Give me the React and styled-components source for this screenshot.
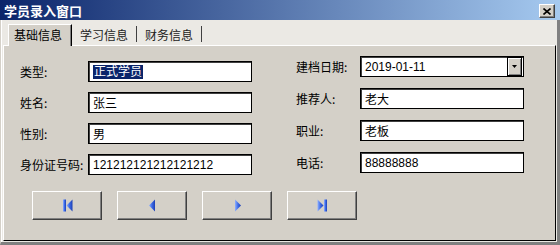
import React from 'react';
import styled, { createGlobalStyle } from 'styled-components';

const GlobalStyle = createGlobalStyle`
  html, body {
    margin: 0;
    padding: 0;
    width: 560px;
    height: 245px;
    overflow: hidden;
    background: #d4d0c8;
  }
`;

const font = `"Liberation Sans", "Noto Sans CJK SC", sans-serif`;

const Window = styled.div`
  width: 560px;
  height: 245px;
  display: flex;
  flex-direction: column;
  font-family: ${font};
  font-size: 12px;
  color: #000;
  background: #d4d0c8;
  box-sizing: border-box;
`;

const TitleBar = styled.div`
  height: 20px;
  flex: none;
  display: flex;
  align-items: center;
  justify-content: space-between;
  padding: 0 5px 0 4px;
  background: linear-gradient(to right, #0a246a, #a6caf0);
  color: #fff;
  font-family: "Noto Sans CJK SC", sans-serif;
  font-weight: bold;
  font-size: 13px;
  box-sizing: border-box;
`;

const CloseButton = styled.div`
  width: 16px;
  height: 14px;
  margin-top: 2px;
  box-sizing: border-box;
  display: flex;
  align-items: center;
  justify-content: center;
  background: #d4d0c8;
  border-top: 1px solid #fff;
  border-left: 1px solid #fff;
  border-right: 1px solid #404040;
  border-bottom: 1px solid #404040;
  box-shadow: inset -1px -1px 0 #808080;
`;

const Body = styled.div`
  flex: 1;
  display: flex;
  flex-direction: column;
  background: #ebe9e4;
  border-left: 1px solid #d4d0c8;
  border-right: 3px solid #808080;
  border-bottom: 3px solid #808080;
  box-shadow: inset 1px 0 0 #fff;
`;

const TabStrip = styled.div`
  height: 25px;
  flex: none;
  display: flex;
  align-items: flex-end;
  padding-left: 7px;
  box-sizing: border-box;
`;

const Tab = styled.div`
  height: ${({ $active }) => ($active ? '22px' : '16px')};
  margin-bottom: ${({ $active }) => ($active ? '-1px' : '3px')};
  display: flex;
  align-items: center;
  box-sizing: border-box;
  font-family: "Noto Sans CJK SC", sans-serif;
  font-size: 12px;
  color: ${({ $active }) => ($active ? '#000' : '#222')};
  position: relative;
  z-index: 1;
  ${({ $active }) =>
    $active
      ? `
    padding: 0 9px 2px 5px;
    background: #d4d0c8;
    border-left: 1px solid #fff;
    border-top: 1px solid #fff;
    border-right: 1px solid #000;
    box-shadow: inset -1px 0 0 #808080;
  `
      : `
    padding: 0 8px 0 8px;
    border-right: 1px solid #404040;
  `}
`;

const Panel = styled.div`
  flex: 1;
  display: flex;
  flex-direction: column;
  margin: 0 1px 1px 2px;
  background: #d4d0c8;
  border-top: 1px solid #fff;
  border-left: 1px solid #fff;
  border-right: 1px solid #000;
  border-bottom: 1px solid #000;
`;

const FormGrid = styled.div`
  display: flex;
  gap: 44px;
  padding-left: 16px;
`;

const Column = styled.div`
  display: flex;
  flex-direction: column;
  gap: ${({ $gap }) => $gap}px;
  padding-top: ${({ $top }) => $top}px;
`;

const Row = styled.div`
  display: flex;
  align-items: center;
  height: 21px;
`;

const Label = styled.div`
  width: ${({ $width }) => $width}px;
  font-family: "Noto Sans CJK SC", sans-serif;
  font-size: 12px;
  flex: none;
`;

const Field = styled.div`
  width: 164px;
  height: 21px;
  box-sizing: border-box;
  display: flex;
  align-items: center;
  padding-left: 4px;
  background: #fff;
  border: 1px solid #000;
  box-shadow: inset 1px 1px 0 #404040;
  font-size: 12px;
  white-space: nowrap;
  overflow: hidden;
`;

const Selected = styled.span`
  background: #0a246a;
  color: #fff;
  padding: 0 1px;
  line-height: 14px;
`;

const Combo = styled(Field)`
  justify-content: space-between;
  padding-right: 1px;
`;

const DropButton = styled.div`
  width: 15px;
  height: 19px;
  box-sizing: border-box;
  display: flex;
  align-items: center;
  justify-content: center;
  background: #d4d0c8;
  border: 1px solid #000;
  box-shadow: inset 1px 1px 0 #fff, inset -1px -1px 0 #808080;
`;

const ButtonRow = styled.div`
  display: flex;
  gap: 15px;
  padding-left: 28px;
  margin-top: 16px;
`;

const NavButton = styled.div`
  width: 70px;
  height: 29px;
  box-sizing: border-box;
  display: flex;
  align-items: center;
  justify-content: center;
  background: #d4d0c8;
  border-top: 1px solid #fff;
  border-left: 1px solid #fff;
  border-right: 1px solid #404040;
  border-bottom: 1px solid #404040;
  box-shadow: inset -1px -1px 0 #808080;
`;

const NavIcon = ({ kind }) => {
  const id = `g-${kind}`;
  const fill = `url(#${id})`;
  return (
    <svg width="11" height="13" viewBox="0 0 11 13">
      <defs>
        <linearGradient id={id} x1="0" y1="0" x2="1" y2="0">
          <stop offset="0" stopColor="#8fb0ff" />
          <stop offset="0.5" stopColor="#3d6ae6" />
          <stop offset="1" stopColor="#1c3fb4" />
        </linearGradient>
      </defs>
      {kind === 'first' && (
        <>
          <rect x="1" y="0.5" width="3" height="12" fill={fill} />
          <polygon points="10.5,0.5 4.5,6.5 10.5,12.5" fill={fill} />
        </>
      )}
      {kind === 'prev' && <polygon points="8,0.5 2,6.5 8,12.5" fill={fill} />}
      {kind === 'next' && <polygon points="3,0.5 9,6.5 3,12.5" fill={fill} />}
      {kind === 'last' && (
        <>
          <polygon points="0.5,0.5 6.5,6.5 0.5,12.5" fill={fill} />
          <rect x="7" y="0.5" width="3" height="12" fill={fill} />
        </>
      )}
    </svg>
  );
};

const leftRows = [
  { label: '类型:', value: <Selected>正式学员</Selected> },
  { label: '姓名:', value: '张三' },
  { label: '性别:', value: '男' },
  { label: '身份证号码:', value: '121212121212121212' },
];

const rightRows = [
  { label: '推荐人:', value: '老大' },
  { label: '职业:', value: '老板' },
  { label: '电话:', value: '88888888' },
];

export default function App() {
  return (
    <Window>
      <GlobalStyle />
      <TitleBar>
        <span>学员录入窗口</span>
        <CloseButton>
          <svg width="8" height="7" viewBox="0 0 8 7">
            <path d="M0.5 0.5 L7.5 6.5 M7.5 0.5 L0.5 6.5" stroke="#000" strokeWidth="1.6" />
          </svg>
        </CloseButton>
      </TitleBar>
      <Body>
        <TabStrip>
          <Tab $active>基础信息</Tab>
          <Tab>学习信息</Tab>
          <Tab>财务信息</Tab>
        </TabStrip>
        <Panel>
          <FormGrid>
            <Column $top={15} $gap={10}>
              {leftRows.map((r) => (
                <Row key={r.label}>
                  <Label $width={68}>{r.label}</Label>
                  <Field>{r.value}</Field>
                </Row>
              ))}
            </Column>
            <Column $top={10} $gap={11}>
              <Row>
                <Label $width={64}>建档日期:</Label>
                <Combo>
                  <span>2019-01-11</span>
                  <DropButton>
                    <svg width="5" height="3" viewBox="0 0 5 3">
                      <polygon points="0,0 5,0 2.5,3" fill="#000" />
                    </svg>
                  </DropButton>
                </Combo>
              </Row>
              {rightRows.map((r) => (
                <Row key={r.label}>
                  <Label $width={64}>{r.label}</Label>
                  <Field>{r.value}</Field>
                </Row>
              ))}
            </Column>
          </FormGrid>
          <ButtonRow>
            <NavButton><NavIcon kind="first" /></NavButton>
            <NavButton><NavIcon kind="prev" /></NavButton>
            <NavButton><NavIcon kind="next" /></NavButton>
            <NavButton><NavIcon kind="last" /></NavButton>
          </ButtonRow>
        </Panel>
      </Body>
    </Window>
  );
}
